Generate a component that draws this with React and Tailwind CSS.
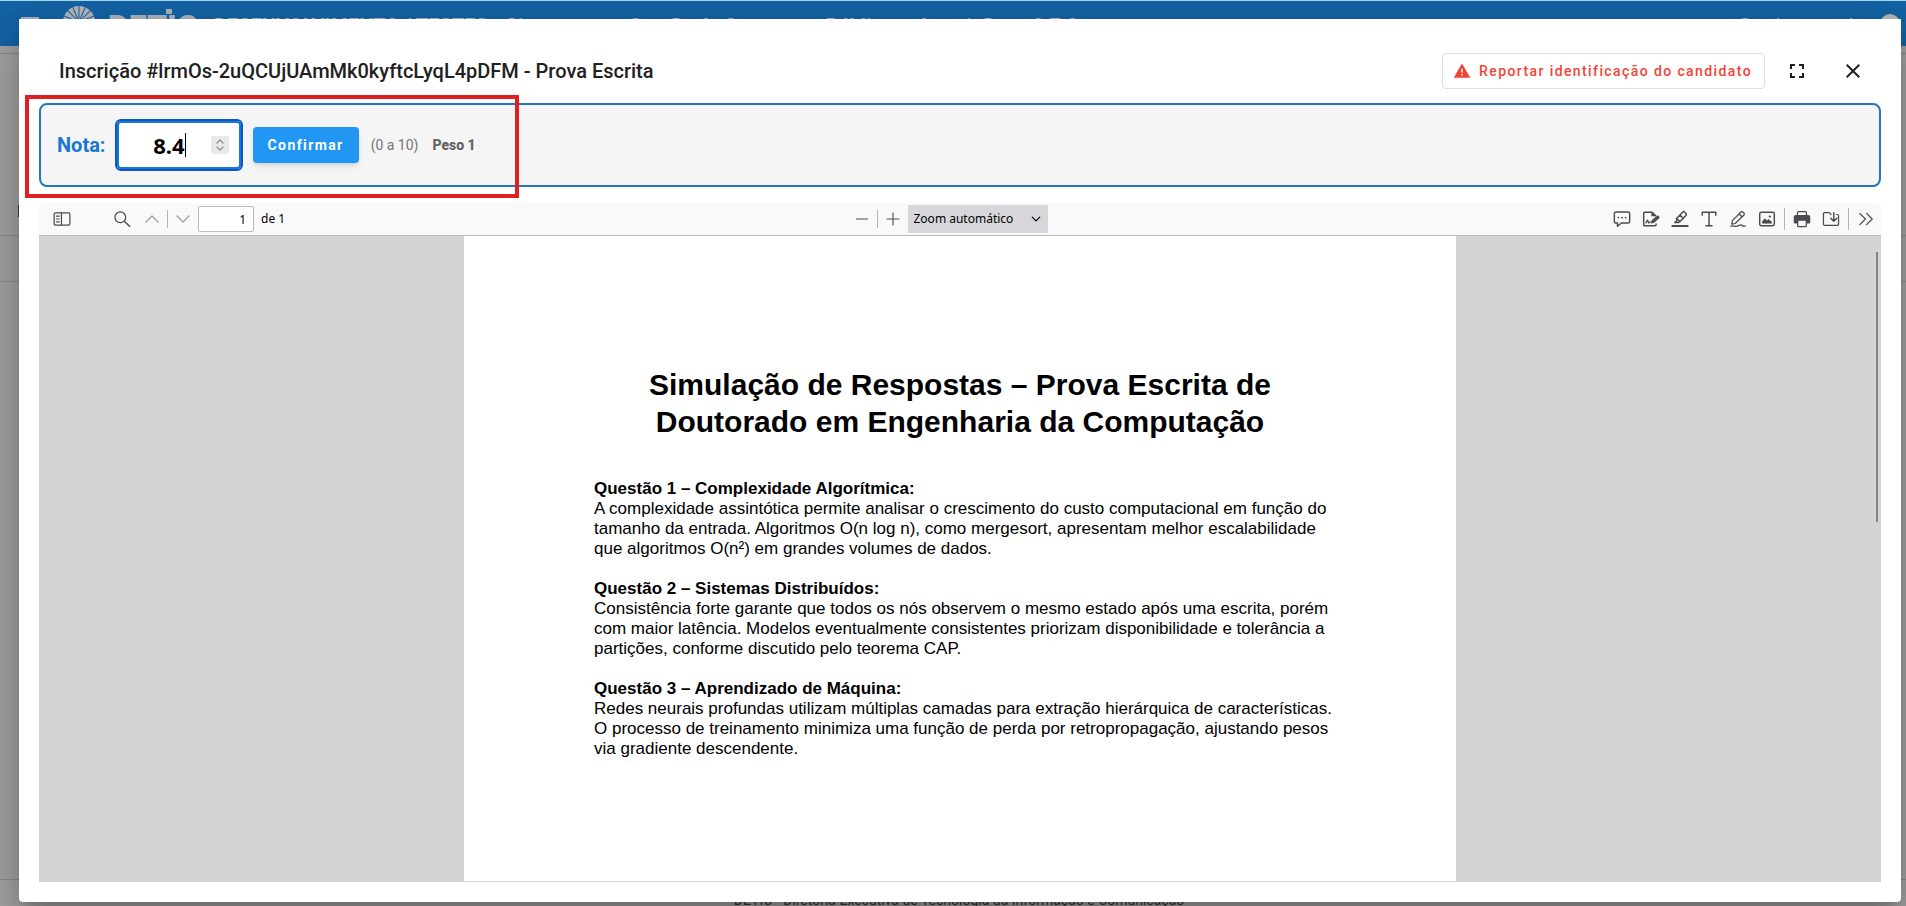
import React from "react";

const Icon = ({ children, size = 20, className = "" }) => (
  <svg
    width={size}
    height={size}
    viewBox="0 0 16 16"
    fill="none"
    stroke="currentColor"
    strokeWidth="1.1"
    strokeLinecap="round"
    strokeLinejoin="round"
    aria-hidden="true"
    className={className}
  >
    {children}
  </svg>
);

const ToolButton = ({ label, className = "w-7", children }) => (
  <button type="button" aria-label={label} className={`flex h-7 shrink-0 items-center justify-center ${className}`}>
    {children}
  </button>
);

const Divider = ({ className = "h-[18px]" }) => <span className={`w-px shrink-0 bg-[#b4b4b6] ${className}`} />;

const RAYS = [0, 22, 45, 67, 90, 113, 135, 158, 180, 202, 225, 315, 338];

const questions = [
  {
    title: "Questão 1 – Complexidade Algorítmica:",
    lines: [
      "A complexidade assintótica permite analisar o crescimento do custo computacional em função do",
      "tamanho da entrada. Algoritmos O(n log n), como mergesort, apresentam melhor escalabilidade",
      "que algoritmos O(n²) em grandes volumes de dados.",
    ],
  },
  {
    title: "Questão 2 – Sistemas Distribuídos:",
    lines: [
      "Consistência forte garante que todos os nós observem o mesmo estado após uma escrita, porém",
      "com maior latência. Modelos eventualmente consistentes priorizam disponibilidade e tolerância a",
      "partições, conforme discutido pelo teorema CAP.",
    ],
  },
  {
    title: "Questão 3 – Aprendizado de Máquina:",
    lines: [
      "Redes neurais profundas utilizam múltiplas camadas para extração hierárquica de características.",
      "O processo de treinamento minimiza uma função de perda por retropropagação, ajustando pesos",
      "via gradiente descendente.",
    ],
  },
];

function Backdrop() {
  return (
    <div className="flex h-full flex-col bg-[#a3a3a3]">
      <header className="flex h-[46px] shrink-0 items-start border-t border-[#a5dbf0] bg-[#1463a5] pl-5 pr-[6px] text-[#a9b4bf]">
        <svg width="20" height="20" viewBox="0 0 20 20" aria-hidden="true" className="mt-4 shrink-0">
          <path d="M1 1h18M1 7h18M1 13h18" stroke="currentColor" strokeWidth="2" />
        </svg>
        <svg width="34" height="34" viewBox="0 0 34 34" aria-hidden="true" className="ml-[22px] mt-1 shrink-0">
          <circle cx="17" cy="17" r="16" fill="#b4b9be" />
          {RAYS.map((a) => (
            <path key={a} d="M17 17L33 17" stroke="#1463a5" strokeWidth="1" transform={`rotate(${-a} 17 17)`} />
          ))}
        </svg>
        <span className="relative ml-3 mt-[5px] w-[92px] shrink-0 text-[32px] leading-[40px] font-black">
          DETIC
          <span className="absolute top-[3px] right-[28px] h-[5px] w-[6px] bg-[#a9b4bf]" />
        </span>
        <span className="ml-[14px] mt-[9px] text-xl leading-8 font-bold whitespace-nowrap">
          DESENVOLVIMENTO / TESTES - Sistema para Gestão de Concursos Públicos - Inscrições - 2.7.0
        </span>
        <span className="mt-[9px] ml-auto text-xl leading-8">t@uniramos.de</span>
        <span className="mt-[13px] ml-4 size-5 shrink-0 rounded-full bg-[#b4b9be]" />
      </header>
      <div className="h-2 shrink-0 border-b border-[#8d8d8d]" />
      <div className="flex h-[182px] shrink-0 items-end border-b border-[#8d8d8d] pb-[18px] pl-[18px]">
        <span className="h-3 w-3 bg-[#4a4038]" />
      </div>
      <div className="h-[46px] shrink-0 border-b border-[#8d8d8d]" />
      <div className="flex-1 border-b border-[#8d8d8d]" />
      <footer className="flex h-[26px] shrink-0 items-end justify-center pl-3 text-sm leading-[12px] text-[#333333]">
        DETIC - Diretoria Executiva de Tecnologia da Informação e Comunicação
      </footer>
    </div>
  );
}

function TitleBar() {
  return (
    <div className="flex h-[36px] items-center pl-5 text-[#212121]">
      <h1 className="text-xl font-medium whitespace-nowrap">Inscrição #lrmOs-2uQCUjUAmMk0kyftcLyqL4pDFM - Prova Escrita</h1>
      <button
        type="button"
        className="ml-auto flex h-9 items-center gap-2 rounded border border-[#dedede] pr-3 pl-[10px] text-sm font-medium tracking-widest whitespace-nowrap text-[#f44336]"
      >
        <svg width="18" height="18" viewBox="0 0 24 24" fill="currentColor" aria-hidden="true">
          <path d="M13 14h-2V9h2m0 9h-2v-2h2M1 21h22L12 2 1 21z" />
        </svg>
        Reportar identificação do candidato
      </button>
      <button type="button" aria-label="Tela cheia" className="ml-[14px] flex size-9 items-center justify-center">
        <svg width="24" height="24" viewBox="0 0 24 24" fill="currentColor" aria-hidden="true">
          <path d="M5 5h5v2H7v3H5V5m9 0h5v5h-2V7h-3V5m3 9h2v5h-5v-2h3v-3m-7 3v2H5v-5h2v3h3z" />
        </svg>
      </button>
      <button type="button" aria-label="Fechar" className="mr-[10px] ml-5 flex size-9 items-center justify-center">
        <svg width="24" height="24" viewBox="0 0 24 24" fill="currentColor" aria-hidden="true">
          <path d="M19 6.41 17.59 5 12 10.59 6.41 5 5 6.41 10.59 12 5 17.59 6.41 19 12 13.41 17.59 19 19 17.59 13.41 12 19 6.41z" />
        </svg>
      </button>
    </div>
  );
}

function GradeBar() {
  return (
    <div className="relative mt-[14px]">
      <form
        className="flex h-[84px] items-center rounded-lg border-2 border-[#2277bb] bg-[#f5f5f5] pl-4"
        onSubmit={(e) => e.preventDefault()}
      >
        <label htmlFor="nota" className="text-xl font-bold text-[#1976d2]">
          Nota:
        </label>
        <span className="ml-[9px] flex h-[52px] w-[128px] items-center rounded-md border-2 border-[#0a58c4] bg-white pr-3 ring-2 ring-[#1976d2] ring-inset">
          <input
            id="nota"
            type="text"
            inputMode="decimal"
            defaultValue="8.4"
            className="w-[68px] bg-transparent text-right font-['Noto_Sans'] text-[22px] leading-7 font-bold text-black outline-none"
          />
          <span className="h-6 w-px shrink-0 bg-black" />
          <span className="ml-auto flex h-[18px] w-[18px] items-center justify-center rounded-xs bg-[#e9e9ed] text-[#8f8f94]">
            <Icon size={16}>
              <path d="M5 6l3-3 3 3M5 10l3 3 3-3" strokeWidth="1.4" />
            </Icon>
          </span>
        </span>
        <button
          type="submit"
          className="ml-[10px] h-9 rounded bg-[#2196f3] px-[15px] text-sm font-bold tracking-widest text-white shadow-md"
        >
          Confirmar
        </button>
        <span className="ml-3 text-sm text-[#757575]">(0 a 10)</span>
        <span className="ml-[14px] text-sm font-extrabold text-[#616161]">Peso 1</span>
      </form>
      <div className="pointer-events-none absolute -top-2 -left-[14px] h-[103px] w-[494px] border-4 border-[#e02020]" />
    </div>
  );
}

function PdfToolbar() {
  return (
    <div className="mt-4 flex h-[33px] items-center rounded-t border-b border-[#b8b8b8] bg-[#f9f9fa] font-['Noto_Sans'] text-xs text-[#4a4a4f]">
      <div className="flex flex-1 items-center pl-[9px]">
        <ToolButton label="Painel lateral">
          <Icon size={18}>
            <rect x="1" y="2.5" width="14" height="11" rx="1.2" />
            <path d="M7.5 2.5v11M3 5.5h2.5M3 8h2.5M3 10.5h2.5" />
          </Icon>
        </ToolButton>
        <ToolButton label="Localizar" className="ml-8 w-7">
          <Icon size={18}>
            <circle cx="6.5" cy="6.5" r="4.8" />
            <path d="M10.2 10.2l4.6 4.3" strokeWidth="1.3" />
          </Icon>
        </ToolButton>
        <ToolButton label="Página anterior" className="ml-px w-[30px] text-[#a0a0a3]">
          <Icon size={16}>
            <path d="M2 11l6-6 6 6" strokeWidth="1.4" />
          </Icon>
        </ToolButton>
        <Divider />
        <ToolButton label="Próxima página" className="w-[30px] text-[#a0a0a3]">
          <Icon size={16}>
            <path d="M2 5l6 6 6-6" strokeWidth="1.4" />
          </Icon>
        </ToolButton>
        <input
          aria-label="Página"
          defaultValue="1"
          className="h-[26px] w-14 rounded-xs border border-[#bbbbbc] bg-white px-[7px] text-right text-black"
        />
        <span className="ml-[7px] text-black">de 1</span>
      </div>
      <div className="mr-[34px] flex items-center">
        <ToolButton label="Reduzir" className="w-[30px]">
          <Icon size={16}>
            <path d="M2.5 8h11" />
          </Icon>
        </ToolButton>
        <Divider />
        <ToolButton label="Ampliar" className="w-[30px]">
          <Icon size={16}>
            <path d="M2 8h12M8 2v12" />
          </Icon>
        </ToolButton>
        <span className="relative flex items-center">
          <select aria-label="Zoom" className="h-7 w-[140px] appearance-none bg-[#d7d7db] pl-[6px] text-xs text-black">
            <option>Zoom automático</option>
          </select>
          <Icon size={12} className="pointer-events-none absolute right-[6px] text-black">
            <path d="M3 5.5l5 5 5-5" strokeWidth="1.6" />
          </Icon>
        </span>
      </div>
      <div className="flex flex-1 items-center justify-end gap-px pr-px">
        <ToolButton label="Comentar">
          <Icon size={18}>
            <path d="M2.5 1.8h11a1.300 1.300 0 0 1 1.300 1.300v7.100a1.300 1.300 0 0 1-1.300 1.300H7.500l-3.500 3v-3H2.500a1.300 1.300 0 0 1-1.300-1.300V3.100a1.300 1.300 0 0 1 1.300-1.300z" strokeWidth="1.300" />
            <path d="M4.800 6.700h.1M8 6.700h.1M11.200 6.700h.1" strokeWidth="1.500" />
          </Icon>
        </ToolButton>
        <ToolButton label="Assinar">
          <Icon size={18}>
            <path d="M12 5L9 2H2.500a1 1 0 0 0-1 1v10a1 1 0 0 0 1 1h9a1 1 0 0 0 1-1v-.5M9 2v3h3" strokeWidth="1.300" />
            <path d="M3.500 11.500l1.500-2.500 1 2.500 1.500-1" />
            <path d="M8.500 11.500l.7-2.200 4.800-4 1.200 1.400-4.700 4.200z" fill="currentColor" />
          </Icon>
        </ToolButton>
        <ToolButton label="Destacar">
          <Icon size={18}>
            <path d="M5 7.500l5.500-5.800a1 1 0 0 1 1.400 0l1.500 1.500a1 1 0 0 1 0 1.400L8 10.300zM5 7.500v2l-1.500 1.700h3L8 10.300M8 4.500l3 3" strokeWidth="1.300" />
            <path d="M1.200 14.300h13.600" strokeWidth="1.800" />
          </Icon>
        </ToolButton>
        <ToolButton label="Texto">
          <Icon size={18}>
            <path d="M2 4.500V2h12v2.500M8 2v12M5.500 14h5" strokeLinecap="square" strokeWidth="1.300" />
          </Icon>
        </ToolButton>
        <ToolButton label="Desenhar">
          <Icon size={18}>
            <path d="M3 9.500l7.600-7.700a1.200 1.200 0 0 1 1.700 0l1 1a1.200 1.200 0 0 1 0 1.700L5.500 12l-3 .5zM9 3.500l2.700 2.700" />
            <path d="M1.500 14.500c2-1 3.500.5 5.500 0s3-1.800 4-1.200.5 1.400 3.500 1" />
          </Icon>
        </ToolButton>
        <ToolButton label="Imagem">
          <Icon size={18}>
            <rect x="1.500" y="2" width="13" height="12" rx="1.500" strokeWidth="1.300" />
            <path d="M4 11.500V10l2.200-2.200L8 9.600l1.300-1.200L12 10.500v1z" fill="currentColor" strokeWidth=".6" />
            <circle cx="10.500" cy="5.800" r="1" fill="currentColor" stroke="none" />
          </Icon>
        </ToolButton>
        <Divider className="mx-[2px] h-[22px]" />
        <ToolButton label="Imprimir">
          <Icon size={18}>
            <path d="M4 5V2.500a1 1 0 0 1 1-1h6a1 1 0 0 1 1 1V5" />
            <path d="M2.500 5h11a1.300 1.300 0 0 1 1.300 1.300v4.400a.8.8 0 0 1-.8.8H2a.8.8 0 0 1-.8-.8V6.300A1.300 1.300 0 0 1 2.500 5z" fill="currentColor" />
            <rect x="4.200" y="9" width="7.600" height="5.800" rx=".8" fill="#f9f9fa" />
          </Icon>
        </ToolButton>
        <ToolButton label="Salvar">
          <Icon size={18}>
            <path d="M8 4L6.500 2.300H2.300a1 1 0 0 0-1 1v9.400a1 1 0 0 0 1 1h11.400a1 1 0 0 0 1-1V5a1 1 0 0 0-1-1H13" />
            <path d="M10.500 2.500v7M7.800 7.300l2.700 2.700 2.700-2.700" strokeWidth="1.300" />
          </Icon>
        </ToolButton>
        <Divider className="mx-[2px] h-[22px]" />
        <ToolButton label="Mais ferramentas">
          <Icon size={18}>
            <path d="M2.500 3l5 5-5 5M8.500 3l5 5-5 5" />
          </Icon>
        </ToolButton>
      </div>
    </div>
  );
}

function PdfViewer() {
  return (
    <div className="relative flex min-h-0 flex-1 justify-center overflow-hidden border-b border-[#d4d4d7] bg-[#d4d4d6]">
      <article className="w-[992px] bg-white px-[130px] pt-[130px] font-['Liberation_Sans'] text-black">
        <h2 className="text-center text-[30px] leading-[37px] font-bold">
          Simulação de Respostas – Prova Escrita de
          <br />
          Doutorado em Engenharia da Computação
        </h2>
        <div className="mt-[39px] flex flex-col gap-5 text-[17px] leading-5 whitespace-nowrap">
          {questions.map((q) => (
            <section key={q.title}>
              <h3 className="font-bold">{q.title}</h3>
              {q.lines.map((l) => (
                <p key={l}>{l}</p>
              ))}
            </section>
          ))}
        </div>
      </article>
      <div className="absolute top-4 right-[3px] h-[270px] w-[2px] bg-[#858587]" />
    </div>
  );
}

export default function App() {
  return (
    <div className="relative h-screen overflow-hidden font-[Roboto,sans-serif]">
      <Backdrop />
      <main className="absolute inset-x-0 top-0 flex h-full pt-[19px] pr-[5px] pb-1 pl-[19px]">
        <div
          role="dialog"
          aria-label="Prova Escrita"
          className="flex min-w-0 flex-1 flex-col rounded-b bg-white px-5 pt-[34px] pb-5 shadow-[0_11px_15px_-7px_rgba(0,0,0,0.2),0_24px_38px_3px_rgba(0,0,0,0.14),0_9px_46px_8px_rgba(0,0,0,0.12)]"
        >
          <TitleBar />
          <GradeBar />
          <PdfToolbar />
          <PdfViewer />
        </div>
      </main>
    </div>
  );
}
